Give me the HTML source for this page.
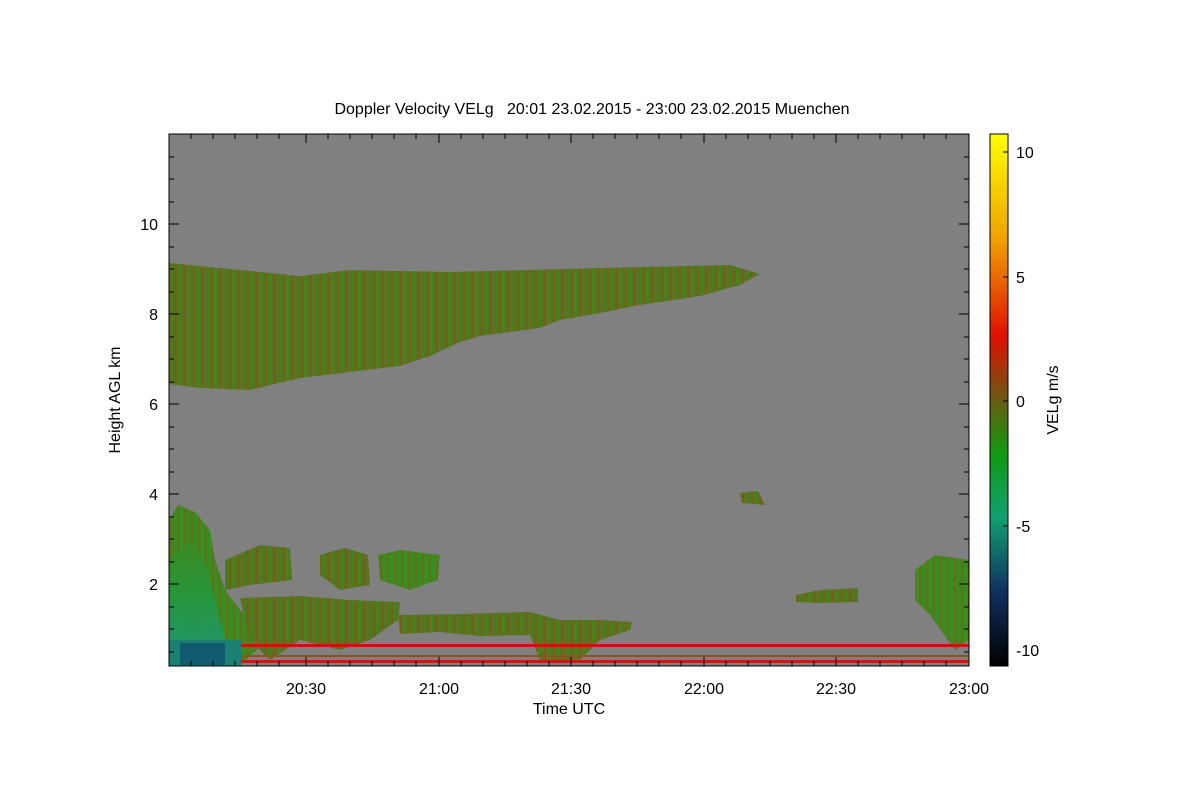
<!DOCTYPE html>
<html><head><style>body{margin:0;background:#fff}svg{display:block}text{font-family:"Liberation Sans",sans-serif;fill:#000}</style></head><body>
<svg width="1200" height="800" viewBox="0 0 1200 800" xmlns="http://www.w3.org/2000/svg">
<defs>
<pattern id="st" width="9" height="40" patternUnits="userSpaceOnUse">
<rect width="9" height="40" fill="#5d7020"/>
<rect x="0" width="2" height="40" fill="#46801c"/>
<rect x="4" width="2" height="40" fill="#6e621c"/>
<rect x="7" width="1" height="40" fill="#4a841a"/>
</pattern>
<pattern id="st2" width="7" height="40" patternUnits="userSpaceOnUse">
<rect width="7" height="40" fill="#428820"/>
<rect x="2" width="2" height="40" fill="#5e721c"/>
<rect x="5" width="1" height="40" fill="#2a9420"/>
</pattern>
<linearGradient id="cb" x1="0" y1="0" x2="0" y2="1">
<stop offset="0" stop-color="#ffff00"/>
<stop offset="0.2" stop-color="#f0a000"/>
<stop offset="0.38" stop-color="#e01000"/>
<stop offset="0.5" stop-color="#6a5a10"/>
<stop offset="0.6" stop-color="#109a10"/>
<stop offset="0.72" stop-color="#10a070"/>
<stop offset="0.86" stop-color="#103060"/>
<stop offset="1" stop-color="#000000"/>
</linearGradient>
<linearGradient id="lb" x1="0" y1="0" x2="0" y2="1">
<stop offset="0" stop-color="#3a8a22"/>
<stop offset="0.55" stop-color="#1e9a40"/>
<stop offset="1" stop-color="#1a9a70"/>
</linearGradient>
</defs>
<text x="592" y="114" font-size="16" text-anchor="middle" xml:space="preserve">Doppler Velocity VELg   20:01 23.02.2015 - 23:00 23.02.2015 Muenchen</text>
<rect x="169" y="134" width="800" height="532" fill="#808080"/>
<path d="M169,263 L220,268 L300,276 L350,270 L450,272 L600,268 L730,265 L760,274 L740,285 L700,296 L640,305 L600,313 L560,320 L540,328 L480,336 L460,342 L430,356 L400,366 L350,372 L300,378 L250,390 L200,388 L169,384 Z" fill="url(#st)"/>
<path d="M169,520 L178,505 L195,512 L210,530 L215,560 L225,590 L240,610 L255,620 L262,645 L240,666 L169,666 Z" fill="url(#st2)"/>
<path d="M169,560 L190,540 L205,560 L215,600 L225,640 L169,640 Z" fill="url(#lb)" opacity="0.8"/>
<rect x="169" y="640" width="72" height="26" fill="#1a8070"/>
<rect x="180" y="643" width="45" height="22" fill="#104a70" opacity="0.7"/>
<path d="M225,560 L260,545 L290,548 L292,580 L250,585 L225,590 Z" fill="url(#st)"/>
<path d="M240,598 L300,596 L350,600 L400,602 L398,620 L370,640 L340,650 L300,640 L270,660 L250,640 Z" fill="url(#st)"/>
<path d="M320,555 L345,548 L368,555 L370,585 L340,590 L320,575 Z" fill="url(#st)"/>
<path d="M378,555 L400,550 L440,555 L438,580 L410,590 L380,580 Z" fill="url(#st2)"/>
<path d="M398,615 L460,614 L530,612 L560,620 L600,620 L632,622 L630,630 L600,640 L580,660 L540,660 L530,635 L480,636 L440,632 L400,634 Z" fill="url(#st)"/>
<path d="M740,493 L758,491 L765,505 L742,503 Z" fill="url(#st)"/>
<path d="M796,595 L820,590 L858,588 L858,602 L820,603 L796,602 Z" fill="url(#st)"/>
<path d="M915,570 L935,555 L969,560 L969,640 L955,650 L930,615 L915,600 Z" fill="url(#st2)"/>
<rect x="241" y="644" width="728" height="3" fill="#d01010"/>
<rect x="241" y="655" width="728" height="2" fill="#7a5a20"/>
<rect x="241" y="660" width="728" height="3" fill="#c02010"/>
<rect x="169" y="134" width="800" height="532" fill="none" stroke="#000" stroke-width="1"/>
<g stroke="#000" stroke-width="1">
<path d="M191,666v-5M213,666v-5M235,666v-5M257,666v-5M279,666v-5M306,666v-9M328,666v-5M350,666v-5M372,666v-5M394,666v-5M416,666v-5M439,666v-9M461,666v-5M483,666v-5M505,666v-5M527,666v-5M549,666v-5M571,666v-9M593,666v-5M615,666v-5M637,666v-5M659,666v-5M681,666v-5M704,666v-9M726,666v-5M748,666v-5M770,666v-5M792,666v-5M814,666v-5M836,666v-9M858,666v-5M880,666v-5M902,666v-5M924,666v-5M946,666v-5"/>
<path d="M191,134v5M213,134v5M235,134v5M257,134v5M279,134v5M306,134v9M328,134v5M350,134v5M372,134v5M394,134v5M416,134v5M439,134v9M461,134v5M483,134v5M505,134v5M527,134v5M549,134v5M571,134v9M593,134v5M615,134v5M637,134v5M659,134v5M681,134v5M704,134v9M726,134v5M748,134v5M770,134v5M792,134v5M814,134v5M836,134v9M858,134v5M880,134v5M902,134v5M924,134v5M946,134v5"/>
<path d="M169,652h5M169,629h5M169,607h5M169,584h10M169,562h5M169,539h5M169,517h5M169,494h10M169,472h5M169,449h5M169,427h5M169,404h10M169,382h5M169,359h5M169,337h5M169,314h10M169,292h5M169,269h5M169,247h5M169,224h10M169,202h5M169,179h5M169,157h5"/>
<path d="M969,652h-5M969,629h-5M969,607h-5M969,584h-10M969,562h-5M969,539h-5M969,517h-5M969,494h-10M969,472h-5M969,449h-5M969,427h-5M969,404h-10M969,382h-5M969,359h-5M969,337h-5M969,314h-10M969,292h-5M969,269h-5M969,247h-5M969,224h-10M969,202h-5M969,179h-5M969,157h-5"/>
</g>
<g font-size="16" text-anchor="end">
<text x="158" y="590">2</text><text x="158" y="500">4</text><text x="158" y="410">6</text><text x="158" y="320">8</text><text x="158" y="230">10</text>
</g>
<g font-size="16" text-anchor="middle">
<text x="306" y="694">20:30</text><text x="439" y="694">21:00</text><text x="571" y="694">21:30</text><text x="704" y="694">22:00</text><text x="836" y="694">22:30</text><text x="969" y="694">23:00</text>
<text x="569" y="714">Time UTC</text>
</g>
<text transform="translate(120,400) rotate(-90)" font-size="16" text-anchor="middle">Height AGL km</text>
<rect x="990" y="134" width="18" height="532" fill="url(#cb)" stroke="#000"/>
<g stroke="#000"><path d="M1008,152h-5M1008,277h-5M1008,401h-5M1008,526h-5M1008,650h-5"/></g>
<g font-size="16">
<text x="1016" y="158">10</text><text x="1016" y="283">5</text><text x="1016" y="407">0</text><text x="1016" y="532">-5</text><text x="1016" y="656">-10</text>
</g>
<text transform="translate(1058,400) rotate(-90)" font-size="16" text-anchor="middle">VELg m/s</text>
</svg>
</body></html>
